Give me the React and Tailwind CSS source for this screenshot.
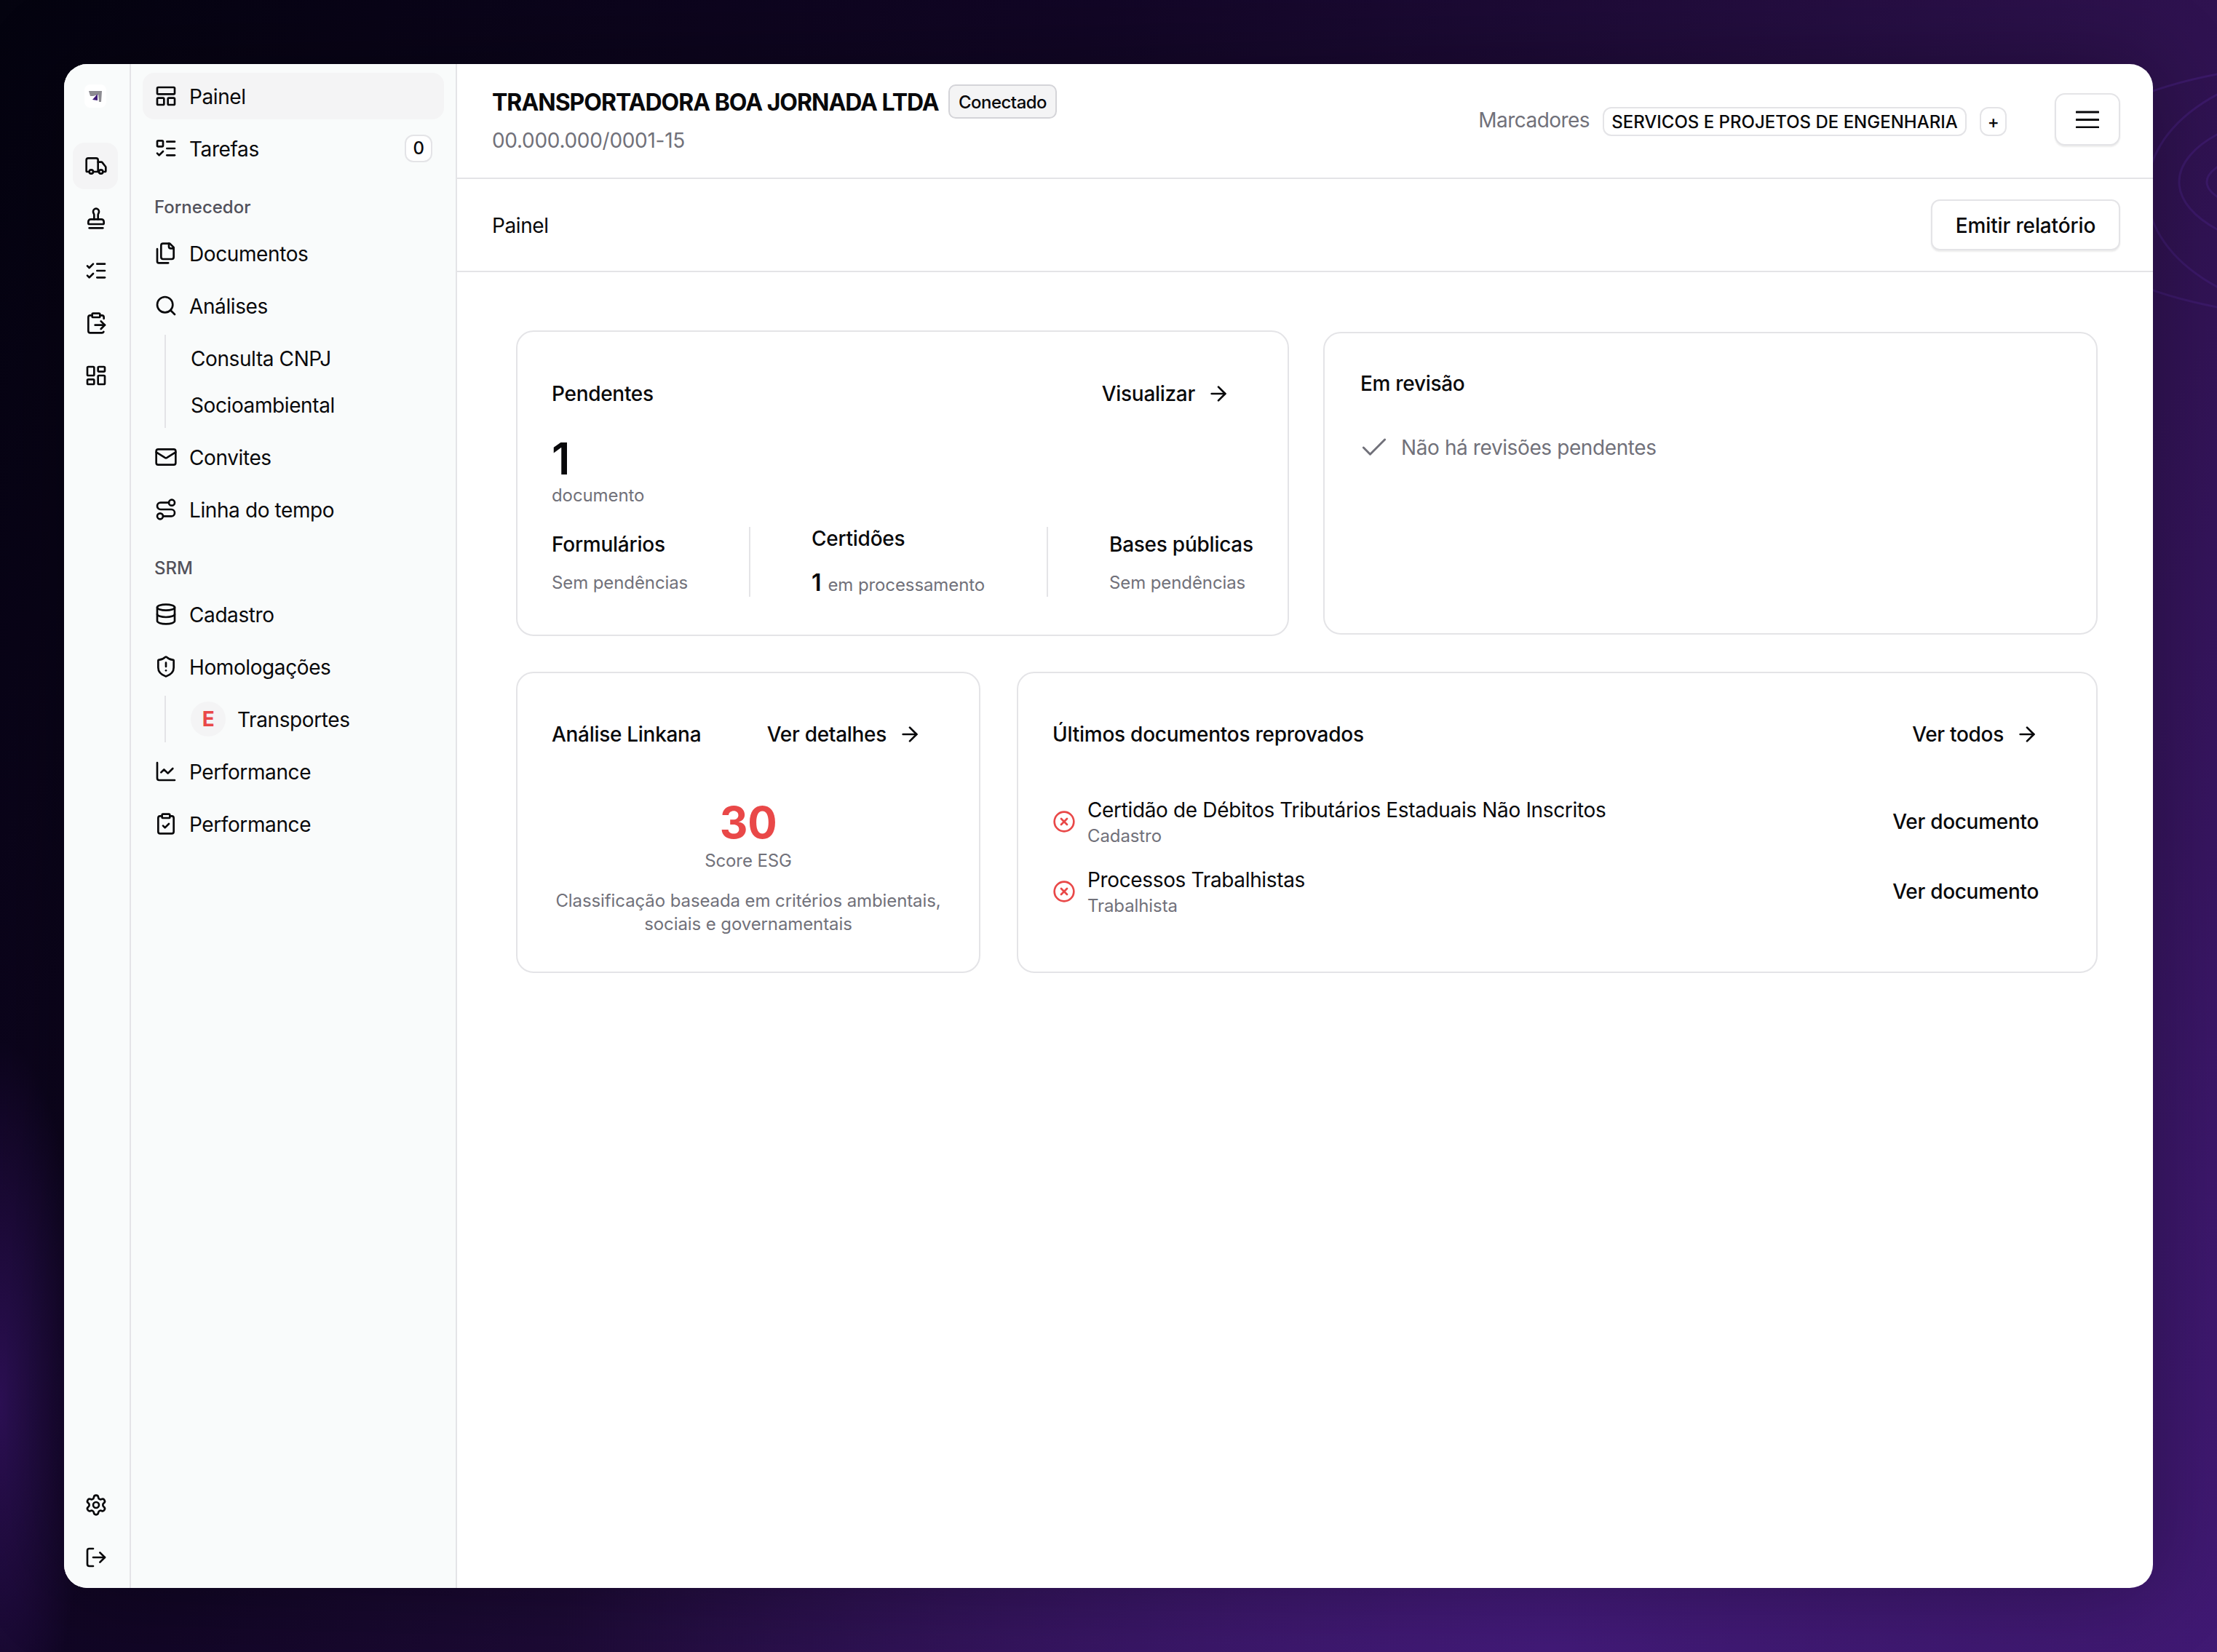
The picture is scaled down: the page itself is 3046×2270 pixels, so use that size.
import React from "react";
import {
  ArrowRight,
  ChartLine,
  Check,
  CircleX,
  ClipboardCheck,
  ClipboardPaste,
  Database,
  LayoutDashboard,
  LayoutPanelTop,
  ListChecks,
  ListTodo,
  LogOut,
  Mail,
  Route,
  Search,
  Settings,
  ShieldAlert,
  Stamp,
  Truck,
} from "lucide-react";

const card = "rounded-[24px] border-2 border-[#e4e4e7] bg-white px-[47px]";
const small = "text-[24px] leading-[32px] tracking-[-0.1px] text-[#71717a]";

// versao antiga do icone "files": folha com dobra e colchete atras
function FilesIcon({ size = 32, className = "" }) {
  return (
    <svg
      width={size}
      height={size}
      viewBox="0 0 24 24"
      fill="none"
      stroke="currentColor"
      strokeWidth="2"
      strokeLinecap="round"
      strokeLinejoin="round"
      className={className}
    >
      <path d="M20 7h-3a2 2 0 0 1-2-2V2" />
      <path d="M9 18a2 2 0 0 1-2-2V4a2 2 0 0 1 2-2h7l4 4v10a2 2 0 0 1-2 2Z" />
      <path d="M3 7.600v12.800A1.600 1.600 0 0 0 4.600 22h9.800" />
    </svg>
  );
}

function RailButton({ icon: Icon, active }) {
  return (
    <div className={`flex h-[64px] w-[62px] items-center justify-center rounded-[16px] pl-[2px] ${active ? "bg-[#f4f4f5]" : ""}`}>
      <Icon size={32} />
    </div>
  );
}

function NavItem({ icon: Icon, label, active, badge }) {
  return (
    <div className={`flex h-[64px] items-center gap-[16px] rounded-[16px] px-[16px] ${active ? "bg-[#f4f4f5]" : ""}`}>
      <Icon size={32} className="shrink-0" />
      <span className="flex-1 pt-[2px] text-[28px] leading-[40px]">{label}</span>
      {badge && (
        <span className="flex h-[38px] w-[38px] items-center justify-center rounded-[12px] border-2 border-[#e4e4e7] bg-white text-[24px] font-medium">
          {badge}
        </span>
      )}
    </div>
  );
}

function NavHeading({ children }) {
  return <div className="h-[64px] pl-[16px] pt-[25px] text-[24px] font-medium leading-[32px] tracking-normal text-[#52525b]">{children}</div>;
}

function SubNav({ children }) {
  return <div className="ml-[30px] flex flex-col border-l-2 border-[#e4e4e7] pl-[34px]">{children}</div>;
}

function LinkButton({ label }) {
  return (
    <div className="flex h-[72px] items-center gap-[16px] pr-[32px] text-[28px] font-medium tracking-[-0.3px]">
      <span>{label}</span>
      <ArrowRight size={32} strokeWidth={2} />
    </div>
  );
}

function Stat({ title, sub, className = "" }) {
  return (
    <div className={`flex h-[96px] shrink-0 flex-col justify-center whitespace-nowrap ${className}`}>
      <div className="text-[28px] font-medium leading-[40px] tracking-[-0.25px]">{title}</div>
      <div className={`mt-[17px] ${small}`}>{sub}</div>
    </div>
  );
}

function RejectedDoc({ title, sub }) {
  return (
    <div className="flex h-[72px] items-center gap-[16px] pr-[32px]">
      <CircleX size={32} className="shrink-0 text-[#e94848]" />
      <div className="flex-1">
        <div className="text-[28px] leading-[40px] tracking-[-0.35px]">{title}</div>
        <div className={small}>{sub}</div>
      </div>
      <span className="text-[28px] font-medium tracking-[-0.3px]">Ver documento</span>
    </div>
  );
}

export default function App() {
  return (
    <div className="relative h-[2270px] w-[3046px] overflow-hidden bg-[radial-gradient(ellipse_at_70%_100%,#421a78_0%,transparent_45%),radial-gradient(ellipse_120px_500px_at_0%_85%,#2c1054,transparent),linear-gradient(120deg,#04030f_0%,#120626_35%,#2f1250_70%,#3f1870_100%)] pl-[88px] pt-[88px] font-[Inter,sans-serif] tracking-[-0.4px] text-[#09090b]">
      {/* arcos do fundo, atras do painel */}
      <svg className="absolute left-0 top-0" width="3046" height="2270" fill="none" stroke="#3b1968" strokeWidth="3">
        <ellipse cx="3210" cy="250" rx="178" ry="52" />
        <ellipse cx="3210" cy="250" rx="216" ry="100" />
        <ellipse cx="3210" cy="262" rx="260" ry="170" />
        <ellipse cx="3210" cy="262" rx="405" ry="175" />
      </svg>

      <div className="relative flex h-[2094px] w-[2870px] overflow-hidden rounded-[32px] bg-white shadow-[0_0_120px_rgba(0,0,0,0.3)]">
        {/* barra de icones */}
        <aside className="flex w-[92px] shrink-0 flex-col border-r-2 border-[#e4e4e7] bg-[#f9fbfb] pl-[12px] pt-[28px]">
          <div className="mb-[48px] ml-[16px] flex h-[32px] w-[30px] items-center justify-center rounded-[8px] bg-white">
            <svg width="30" height="32" viewBox="0 0 30 32">
              <polygon points="6,9 24,9 23,24 20,24 19,14 12,16 8,16" fill="#8c8b91" />
              <polygon points="18,13 11,21 18,22" fill="#3f1a78" />
            </svg>
          </div>
          <div className="flex flex-1 flex-col gap-[8px] pb-[10px]">
            <RailButton icon={Truck} active />
            <RailButton icon={Stamp} />
            <RailButton icon={ListChecks} />
            <RailButton icon={ClipboardPaste} />
            <RailButton icon={LayoutDashboard} />
            <div className="flex-1" />
            <RailButton icon={Settings} />
            <RailButton icon={LogOut} />
          </div>
        </aside>

        {/* menu lateral */}
        <aside className="flex w-[448px] shrink-0 flex-col gap-[8px] border-r-2 border-[#e4e4e7] bg-[#f9fbfb] px-[16px] pt-[12px]">
          <NavItem icon={LayoutPanelTop} label="Painel" active />
          <NavItem icon={ListTodo} label="Tarefas" badge="0" />
          <NavHeading>Fornecedor</NavHeading>
          <NavItem icon={FilesIcon} label="Documentos" />
          <NavItem icon={Search} label="Análises" />
          <SubNav>
            <div className="flex h-[64px] items-center pt-[2px] text-[28px]">Consulta CNPJ</div>
            <div className="flex h-[64px] items-center pt-[2px] text-[28px]">Socioambiental</div>
          </SubNav>
          <NavItem icon={Mail} label="Convites" />
          <NavItem icon={Route} label="Linha do tempo" />
          <NavHeading>SRM</NavHeading>
          <NavItem icon={Database} label="Cadastro" />
          <NavItem icon={ShieldAlert} label="Homologações" />
          <SubNav>
            <div className="flex h-[64px] items-center gap-[16px] text-[28px]">
              <span className="flex h-[48px] w-[48px] items-center justify-center rounded-full bg-[#f4f4f5] font-bold text-[#e94848]">E</span>
              <span className="pt-[2px]">Transportes</span>
            </div>
          </SubNav>
          <NavItem icon={ChartLine} label="Performance" />
          <NavItem icon={ClipboardCheck} label="Performance" />
        </aside>

        <main className="flex min-w-0 flex-1 flex-col">
          {/* cabecalho */}
          <header className="flex h-[158px] shrink-0 justify-between border-b-2 border-[#e4e4e7] pl-[48px] pr-[45px]">
            <div className="pt-[28px]">
              <div className="flex h-[47px] items-center gap-[13px]">
                <h1 className="w-[614px] whitespace-nowrap pt-[2px] text-[32px] font-bold tracking-[-1px]">TRANSPORTADORA BOA JORNADA LTDA</h1>
                <span className="flex h-[47px] w-[149px] items-center justify-center rounded-[10px] border-2 border-[#d4d4d8] bg-[#f4f4f5] pt-[2px] text-[24px] font-medium tracking-[-0.5px]">
                  Conectado
                </span>
              </div>
              <div className="mt-[10px] text-[28px] leading-[40px] tracking-[-0.3px] text-[#71717a]">00.000.000/0001-15</div>
            </div>
            <div className="flex items-start pt-[40px]">
              <span className="mr-[18px] mt-[17px] text-[28px] leading-[40px] tracking-[-0.55px] text-[#71717a]">Marcadores</span>
              <span className="mt-[19px] flex h-[40px] w-[500px] items-center justify-center rounded-[12px] border-2 border-[#e4e4e7] pt-[2px] text-[24px] font-medium tracking-normal">
                SERVICOS E PROJETOS DE ENGENHARIA
              </span>
              <span className="ml-[18px] mt-[19px] flex h-[40px] w-[37px] items-center justify-center rounded-[12px] border-2 border-[#e4e4e7] pt-[2px] text-[24px] font-medium">
                +
              </span>
              <button className="ml-[66px] flex h-[72px] w-[90px] items-center justify-center rounded-[14px] border-2 border-[#e4e4e7] bg-white shadow-[0_2px_2px_rgba(0,0,0,0.08)]">
                <svg width="32" height="24" viewBox="0 0 32 24" stroke="currentColor" strokeWidth="3" strokeLinecap="round">
                  <path d="M1 2h30" />
                  <path d="M1 12.500h30" />
                  <path d="M1 23h30" />
                </svg>
              </button>
            </div>
          </header>

          <div className="flex h-[128px] shrink-0 items-center justify-between border-b-2 border-[#e4e4e7] pl-[48px] pr-[45px]">
            <span className="pt-[2px] text-[28px]">Painel</span>
            <button className="h-[70px] w-[260px] rounded-[12px] border-2 border-[#e4e4e7] bg-white pt-[2px] text-[28px] font-medium tracking-[-0.15px] shadow-[0_2px_2px_rgba(0,0,0,0.08)]">
              Emitir relatório
            </button>
          </div>

          <div className="flex flex-col gap-[49px] pl-[81px] pr-[76px] pt-[80px]">
            <div className="flex gap-[47px]">
              <section className={`${card} h-[420px] w-[1062px] shrink-0 pt-[49px]`}>
                <div className="flex items-center justify-between">
                  <span className="text-[28px] font-medium tracking-[-0.3px]">Pendentes</span>
                  <LinkButton label="Visualizar" />
                </div>
                <div className="mt-[23px] text-[60px] font-semibold leading-[60px]">1</div>
                <div className={`mt-[5px] ${small}`}>documento</div>
                <div className="mt-[27px] flex items-center">
                  <Stat title="Formulários" sub="Sem pendências" className="w-[273px] border-r-2 border-[#e4e4e7]" />
                  <div className="flex h-[96px] w-[409px] shrink-0 flex-col justify-center border-r-2 border-[#e4e4e7] pl-[84px]">
                    <div className="text-[28px] font-medium leading-[40px] tracking-[-0.25px]">Certidões</div>
                    <div className="mt-[21px] flex items-baseline gap-[9px] text-[24px] leading-[40px] tracking-[-0.1px] text-[#71717a]">
                      <span className="text-[32px] font-semibold text-[#09090b]">1</span>
                      em processamento
                    </div>
                  </div>
                  <Stat title="Bases públicas" sub="Sem pendências" className="pl-[84px]" />
                </div>
              </section>

              <section className={`${card} mt-[2px] h-[416px] flex-1 pl-[49px] pt-[49px]`}>
                <div className="text-[28px] font-medium leading-[40px] tracking-[-0.3px]">Em revisão</div>
                <div className="mt-[46px] flex items-center gap-[15px] text-[28px] leading-[40px] text-[#71717a]">
                  <Check size={44} strokeWidth={1.6} className="-ml-[3px]" />
                  Não há revisões pendentes
                </div>
              </section>
            </div>

            <div className="flex gap-[50px]">
              <section className={`${card} h-[414px] w-[638px] shrink-0 pt-[48px]`}>
                <div className="flex items-center justify-between">
                  <span className="text-[28px] font-medium tracking-[-0.3px]">Análise Linkana</span>
                  <LinkButton label="Ver detalhes" />
                </div>
                <div className="mt-[55px] text-center">
                  <div className="text-[60px] font-bold leading-[60px] text-[#e94848]">30</div>
                  <div className={`mt-[7px] ${small}`}>Score ESG</div>
                  <p className={`mt-[23px] ${small}`}>
                    Classificação baseada em critérios ambientais,
                    <br />
                    sociais e governamentais
                  </p>
                </div>
              </section>

              <section className={`${card} h-[414px] flex-1 pt-[48px]`}>
                <div className="flex items-center justify-between">
                  <span className="text-[28px] font-medium tracking-[-0.25px]">Últimos documentos reprovados</span>
                  <LinkButton label="Ver todos" />
                </div>
                <div className="mt-[48px] flex flex-col gap-[24px]">
                  <RejectedDoc title="Certidão de Débitos Tributários Estaduais Não Inscritos" sub="Cadastro" />
                  <RejectedDoc title="Processos Trabalhistas" sub="Trabalhista" />
                </div>
              </section>
            </div>
          </div>
        </main>
      </div>
    </div>
  );
}
